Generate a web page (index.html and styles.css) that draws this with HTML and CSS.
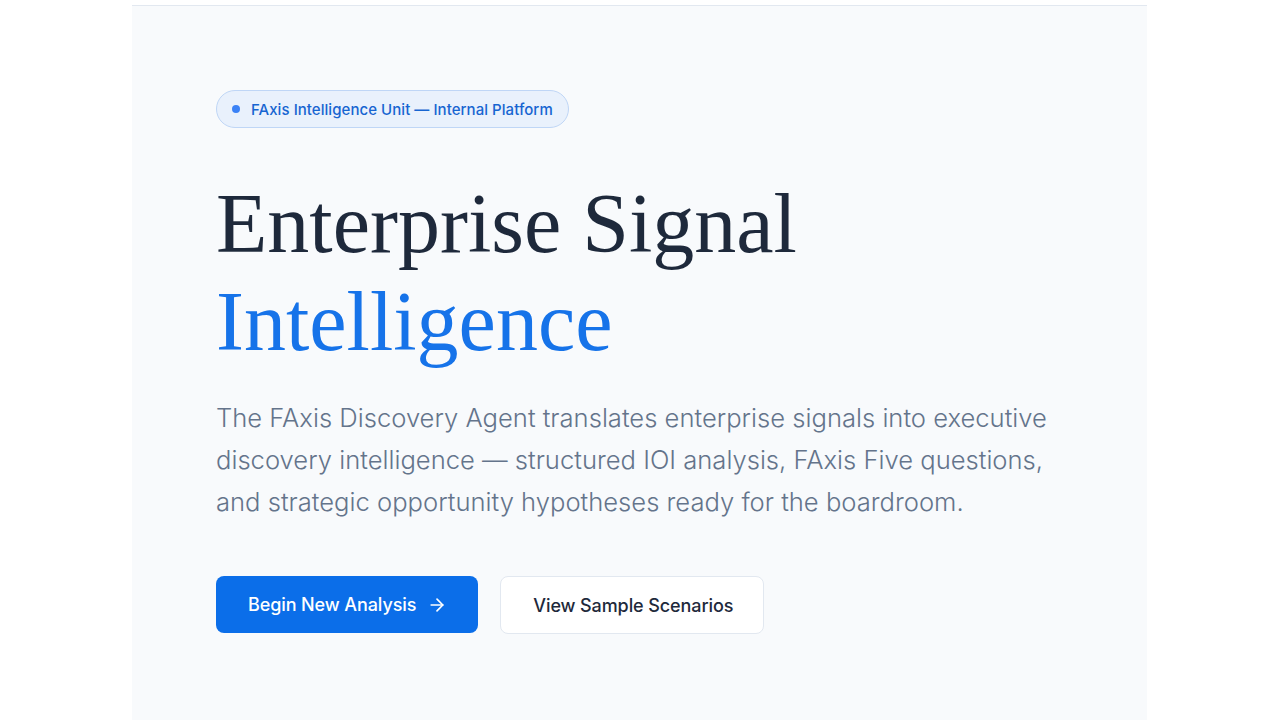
FILE: index.html
```html
<!DOCTYPE html>
<html lang="en">
<head>
<meta charset="utf-8">
<title>FAxis Discovery Agent</title>
<link rel="stylesheet" href="styles.css">
</head>
<body>
<main class="shell">
  <section class="hero">
    <div class="badge"><span class="badge-dot"></span>FAxis Intelligence Unit — Internal Platform</div>
    <h1 class="title">Enterprise Signal<br><span class="title-accent">Intelligence</span></h1>
    <p class="lede">The FAxis Discovery Agent translates enterprise signals into executive discovery intelligence — structured IOI analysis, FAxis Five questions, and strategic opportunity hypotheses ready for the boardroom.</p>
    <div class="actions">
      <a class="btn btn-primary" href="#">Begin New Analysis
        <svg class="btn-icon" viewBox="0 0 24 24" width="20" height="20" fill="none" stroke="currentColor" stroke-width="2" stroke-linecap="round" stroke-linejoin="round"><path d="M5 12h14"/><path d="M12 5l7 7-7 7"/></svg>
      </a>
      <a class="btn btn-secondary" href="#">View Sample Scenarios</a>
    </div>
  </section>
</main>
</body>
</html>
```
FILE: styles.css
```css
* { box-sizing: border-box; }
html, body { margin: 0; padding: 0; background: #ffffff; }
body { font-family: Inter, "Noto Sans", sans-serif; }

.shell {
  width: 1015px;
  margin: 5px 0 0 132px;
}

.hero {
  background: #f8fafc;
  border-top: 1px solid #e2e8f0;
  min-height: 720px;
  padding: 84px 84px 80px;
}

.badge {
  display: inline-flex;
  align-items: center;
  gap: 11px;
  height: 38px;
  padding: 0 15px 0 15px;
  border: 1px solid #bfd6f6;
  background: #e9f1fc;
  border-radius: 999px;
  color: #1765d1;
  font-size: 15px;
  font-weight: 500;
  letter-spacing: 0.05px;
}

.badge-dot {
  width: 8px;
  height: 8px;
  border-radius: 50%;
  background: #3b82f6;
}

.title {
  margin: 47px 0 0;
  font-family: "Liberation Serif", "Times New Roman", serif;
  font-weight: 400;
  font-size: 84px;
  line-height: 98px;
  color: #1e293b;
  letter-spacing: 0;
}

.title-accent { color: #1673e9; }

.lede {
  margin: 26px 0 0;
  width: 850px;
  font-size: 25.6px;
  line-height: 42px;
  font-weight: 300;
  color: #64748b;
}

.actions {
  display: flex;
  gap: 22px;
  margin-top: 53px;
}

.btn {
  display: inline-flex;
  align-items: center;
  height: 58px;
  padding: 0 30px 0 32px;
  border-radius: 8px;
  font-size: 18px;
  font-weight: 500;
  letter-spacing: -0.1px;
  text-decoration: none;
}

.btn-primary {
  background: #0b6ee9;
  color: #ffffff;
  gap: 11px;
  height: 57px;
  padding-right: 31px;
}

.btn-icon { display: block; }

.btn-secondary {
  background: #ffffff;
  border: 1px solid #e2e8f0;
  color: #1e293b;
}
```
